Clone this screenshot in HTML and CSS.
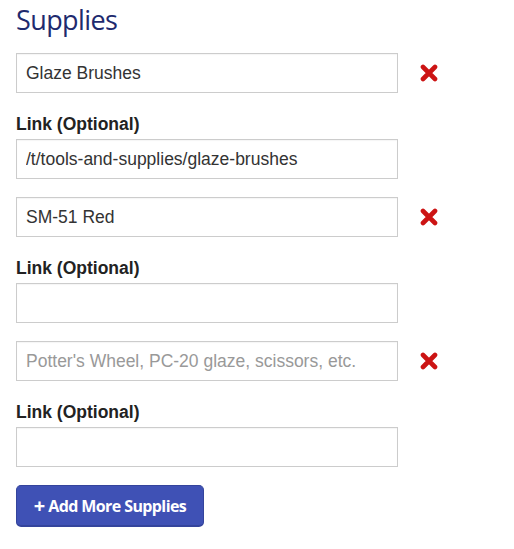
FILE: index.html
```html
<!DOCTYPE html>
<html>
<head>
<meta charset="utf-8">
<link rel="stylesheet" href="styles.css">
</head>
<body>
<div class="page">
  <h2 class="title">Supplies</h2>
  <div class="group">
    <div class="row">
      <input class="field" type="text" value="Glaze Brushes">
      <span class="remove"><svg viewBox="0 0 18 18" width="18" height="18"><path d="M3 3 L15 15 M15 3 L3 15" stroke="#cc1414" stroke-width="4.6" stroke-linecap="round"/></svg></span>
    </div>
    <label class="label">Link (Optional)</label>
    <div class="row">
      <input class="field" type="text" value="/t/tools-and-supplies/glaze-brushes">
    </div>
  </div>
  <div class="group">
    <div class="row">
      <input class="field" type="text" value="SM-51 Red">
      <span class="remove"><svg viewBox="0 0 18 18" width="18" height="18"><path d="M3 3 L15 15 M15 3 L3 15" stroke="#cc1414" stroke-width="4.6" stroke-linecap="round"/></svg></span>
    </div>
    <label class="label">Link (Optional)</label>
    <div class="row">
      <input class="field" type="text" value="">
    </div>
  </div>
  <div class="group">
    <div class="row">
      <input class="field" type="text" placeholder="Potter's Wheel, PC-20 glaze, scissors, etc.">
      <span class="remove"><svg viewBox="0 0 18 18" width="18" height="18"><path d="M3 3 L15 15 M15 3 L3 15" stroke="#cc1414" stroke-width="4.6" stroke-linecap="round"/></svg></span>
    </div>
    <label class="label">Link (Optional)</label>
    <div class="row">
      <input class="field" type="text" value="">
    </div>
  </div>
  <button class="add"><span class="plus">+</span> Add More Supplies</button>
</div>
</body>
</html>
```

FILE: styles.css
```css
html, body { margin: 0; padding: 0; background: #fff; }
.page { padding: 0 16px; }
.title {
  margin: 0;
  padding-top: 4px;
  height: 53px;
  box-sizing: border-box;
  font-family: "Open Sans", sans-serif;
  font-weight: 500;
  font-size: 27px;
  line-height: 32px;
  color: #1e2a6e;
  letter-spacing: -0.6px;
}
.group { display: flex; flex-direction: column; margin-bottom: 18px; }
.row { display: flex; align-items: center; }
.field {
  box-sizing: border-box;
  width: 382px;
  height: 40px;
  margin: 0;
  border: 1px solid #cccccc;
  border-radius: 0;
  padding: 0 9px;
  font-family: "Liberation Sans", Arial, sans-serif;
  font-size: 17.5px;
  color: #333;
  background: #fff;
  box-shadow: inset 0 1px 1px rgba(0,0,0,0.04);
  outline: none;
}
.field::placeholder { color: #999; }
.remove { display: flex; margin-left: 22px; }
.label {
  display: block;
  font-family: "Liberation Sans", Arial, sans-serif;
  font-weight: 700;
  font-size: 17.5px;
  line-height: 20px;
  color: #222;
  margin: 21px 0 5px;
}
.add {
  margin-top: 0;
  width: 188px;
  height: 42px;
  background: #3f51b5;
  border: 1px solid #34449c;
  border-bottom-width: 2px;
  border-radius: 5px;
  color: #fff;
  font-family: "Open Sans", sans-serif;
  font-weight: 700;
  font-size: 16px;
  letter-spacing: -0.6px;
  padding: 0;
}
.plus { font-size: 20px; line-height: 1; vertical-align: -1px; }
```
